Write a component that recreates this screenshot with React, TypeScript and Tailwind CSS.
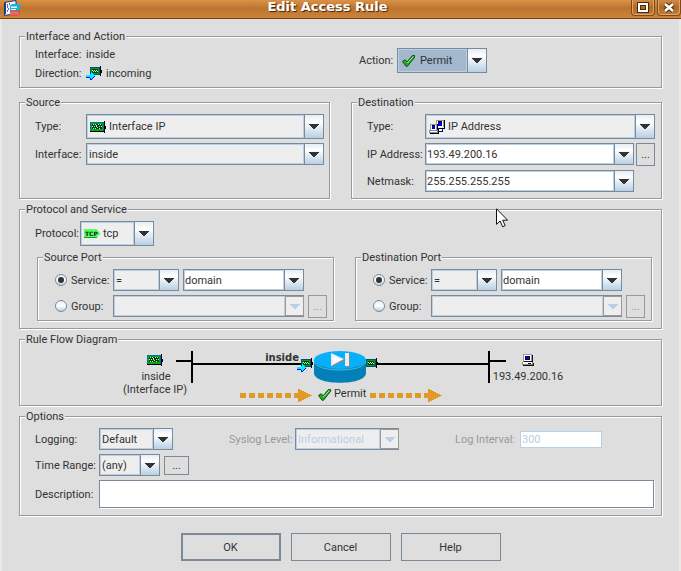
import { useId, useState, type ReactNode } from "react";

const ETCHED =
  "min-w-0 border border-[#999] shadow-[1px_1px_0_#fff,inset_1px_1px_0_#fff]";

function Group({
  title,
  className = "",
  children,
}: {
  title: string;
  className?: string;
  children: ReactNode;
}) {
  return (
    <fieldset className={`${ETCHED} ${className}`}>
      <legend className="ml-[5px] bg-[#dedede] px-px leading-[15px]">{title}</legend>
      {children}
    </fieldset>
  );
}

function Arrow({ disabled = false }: { disabled?: boolean }) {
  return (
    <svg width="10" height="5" viewBox="0 0 10 5" shapeRendering="crispEdges" aria-hidden="true">
      <path
        d="M0 0h10v1H0zM1 1h8v1H1zM2 2h6v1H2zM3 3h4v1H3zM4 4h2v1H4z"
        fill={disabled ? "#b8cfe5" : "#333"}
      />
    </svg>
  );
}

const ARROW_BOX =
  "flex h-full items-center justify-center border-l border-[#7a8a99] bg-linear-to-b from-[#e4edf6] via-white via-30% to-[#b8cfe5]";
const ARROW_BOX_OFF =
  "flex h-full items-center justify-center border border-[#999] bg-[#eee]";

function Select({
  id,
  label,
  options,
  icon,
  disabled = false,
  focused = false,
  className,
}: {
  id?: string;
  label?: string;
  options: string[];
  icon?: ReactNode;
  disabled?: boolean;
  focused?: boolean;
  className: string;
}) {
  return (
    <div
      className={`grid grid-cols-[minmax(0,1fr)_19px] border-[#7a8a99] ${
        disabled ? "border-y border-l" : "border"
      } ${className}`}
    >
      <div
        className={`col-start-1 row-start-1 flex min-w-0 items-center border border-[#b8cfe5] pl-[2px] ${
          focused ? "bg-[#a3b8cc]" : "bg-[#eee]"
        }`}
      >
        {icon}
      </div>
      <select
        id={id}
        aria-label={label}
        disabled={disabled}
        className={`z-1 col-span-2 col-start-1 row-start-1 min-w-0 appearance-none bg-transparent pr-5 outline-none ${
          icon ? "pl-[22px]" : "pl-[2px]"
        } ${disabled ? "text-[#b8cfe5] opacity-100" : ""}`}
      >
        {options.map((o) => (
          <option key={o}>{o}</option>
        ))}
      </select>
      <span
        className={`pointer-events-none col-start-2 row-start-1 ${disabled ? ARROW_BOX_OFF : ARROW_BOX}`}
      >
        <Arrow disabled={disabled} />
      </span>
    </div>
  );
}

function EditCombo({
  id,
  label,
  value,
  disabled = false,
  className,
}: {
  id?: string;
  label?: string;
  value: string;
  disabled?: boolean;
  className: string;
}) {
  return (
    <div
      className={`grid grid-cols-[minmax(0,1fr)_19px] border-[#7a8a99] ${
        disabled ? "border-y border-l" : "border"
      } ${className}`}
    >
      <input
        id={id}
        aria-label={label}
        defaultValue={value}
        disabled={disabled}
        className={`min-w-0 border border-[#b8cfe5] outline-none ${
          disabled ? "bg-[#eee]" : "bg-white"
        }`}
      />
      <button
        type="button"
        aria-label="Show choices"
        disabled={disabled}
        className={disabled ? ARROW_BOX_OFF : ARROW_BOX}
      >
        <Arrow disabled={disabled} />
      </button>
    </div>
  );
}

function MoreButton({ className, disabled = false }: { className: string; disabled?: boolean }) {
  return (
    <button
      type="button"
      aria-label="Browse"
      disabled={disabled}
      className={`shrink-0 border ${
        disabled ? "border-[#999] text-[#999]" : "border-[#7a8a99]"
      } ${className}`}
    >
      ...
    </button>
  );
}

function CardShape({ small = false }: { small?: boolean }) {
  if (small) {
    return (
      <g>
        <path d="M0 1h10v8H0z" fill="#00507c" />
        <path d="M1 2h8v6H1z" fill="#079b1c" />
        <path d="M2 3h6v4H2z" fill="#00400c" />
        <path d="M2 4h1v1H2zM3 5h1v1H3zM4 4h1v1H4zM5 5h1v1H5zM6 4h1v1H6zM7 5h1v1H7z" fill="#c4f4cc" />
        <path d="M10 0h1v10h-1zM11 4h1v3h-1z" fill="#000" />
      </g>
    );
  }
  return (
    <g>
      <path d="M0 1h14v9H0z" fill="#0074a8" />
      <path d="M1 2h12v8H1z" fill="#08a818" />
      <path d="M2 3h10v5H2z" fill="#003c08" />
      <path
        d="M3 3h1v1H3zM5 3h1v1H5zM8 3h1v1H8zM10 3h1v1h-1zM2 5h1v1H2zM4 5h1v1H4zM6 4h1v2H6zM7 6h1v1H7zM9 5h1v1H9zM11 5h1v1h-1zM3 7h1v1H3zM5 7h1v1H5zM9 7h1v1H9z"
        fill="#b8f8c4"
      />
      <path d="M0 10h14v1H0zM14 0h1v12h-1zM15 5h1v3h-1z" fill="#000" />
      <path d="M13 1h1v9h-1z" fill="#0068b8" />
    </g>
  );
}

function InArrow() {
  return (
    <g>
      <path d="M0 4h4V2h1V1h1v1h1v1h1v1h1v1H8v1H7v1H6v1H5v1H4V7H0z" fill="#00f0ff" />
      <path d="M0 6h4v1H0zM4 7h1v2H4zM5 8h1v1H5zM6 7h1v1H6zM7 6h1v1H7zM8 5h1v1H8zM4 1h1v2H4z" fill="#0010f0" />
    </g>
  );
}

function CardIcon() {
  return (
    <svg width="16" height="12" viewBox="0 0 16 12" shapeRendering="crispEdges" aria-hidden="true">
      <CardShape />
    </svg>
  );
}

function IncomingIcon() {
  return (
    <svg width="17" height="16" viewBox="0 0 17 16" shapeRendering="crispEdges" aria-hidden="true">
      <g transform="translate(4 1)">
        <CardShape small />
      </g>
      <g transform="translate(0 6)">
        <InArrow />
      </g>
    </svg>
  );
}

function CheckShape() {
  return (
    <g>
      <path
        d="M.5 6.500 3 4.800l2.200 2L10.300.6h2.300v1.600L5.400 11.300H4.100z"
        fill="#22b022"
        stroke="#0c4a0c"
        strokeWidth="1"
        strokeLinejoin="round"
      />
      <path d="M5.300 8 11.500 1.400" stroke="#a6f0a0" strokeWidth="1" fill="none" />
    </g>
  );
}

function CheckIcon() {
  return (
    <svg width="14" height="12" viewBox="0 0 14 12" className="ml-px" aria-hidden="true">
      <CheckShape />
    </svg>
  );
}

function PcShape() {
  return (
    <g>
      <path d="M1 0h9v8H1z" fill="#999" />
      <path d="M2 1h7v6H2z" fill="#fff" />
      <path d="M3 2h5v4H3z" fill="#000" />
      <path d="M4 2h3v3H4z" fill="#0000e0" />
      <path d="M10 1h1v7h-1zM2 7h8v1H2z" fill="#111" />
      <path d="M0 8h11v3H0z" fill="#888" />
      <path d="M1 8h9v2H1z" fill="#fff" />
      <path d="M6 9h3v1H6zM1 11h11v1H1zM11 9h1v2h-1z" fill="#111" />
    </g>
  );
}

function HostsIcon() {
  return (
    <svg width="16" height="14" viewBox="0 0 16 14" shapeRendering="crispEdges" aria-hidden="true">
      <path d="M7 0h8v7H7z" fill="#999" />
      <path d="M8 1h6v6H8z" fill="#fff" />
      <path d="M9 2h4v4H9z" fill="#0000d0" />
      <path d="M15 0h1v9h-1zM9 8h7v1H9zM9 1h4v1H9z" fill="#000" />
      <path d="M9 9h5v3H9z" fill="#0000a0" />
      <path d="M10 9h3v2h-3z" fill="#fff" />
      <path d="M1 4h7v6H1z" fill="#999" />
      <path d="M2 5h5v5H2z" fill="#fff" />
      <path d="M3 6h3v3H3z" fill="#0000d0" />
      <path d="M8 4h1v6H8zM3 5h3v1H3z" fill="#000" />
      <path d="M0 10h9v3H0z" fill="#888" />
      <path d="M1 11h7v1H1z" fill="#fff" />
      <path d="M1 13h9v1H1zM9 10h1v3H9z" fill="#000" />
    </svg>
  );
}

function TcpIcon() {
  return (
    <svg width="17" height="9" viewBox="0 0 17 9" aria-hidden="true">
      <path d="M0 0h12.500l4 4.500-4 4.500H0z" fill="#58fb62" />
      <path d="M0 8h13.400l-1 1H0z" fill="#159a20" />
      <text x="1" y="7" fontSize="6" fontWeight="700" fontFamily="DejaVu Sans, sans-serif" fill="#052c08">
        TCP
      </text>
    </svg>
  );
}

function AppIcon() {
  return (
    <svg width="17" height="16" viewBox="0 0 17 16" className="ml-[3px]" aria-hidden="true">
      <path d="M1.500 2.500 13 .500v13l-11.500 2z" fill="#f4f8ff" stroke="#17396b" />
      <path d="M2.500 3v11" stroke="#1a3f9c" strokeWidth="1" />
      <path d="M4 5h1M6 4h1M4 7h1M5 9h1M4 11h1" stroke="#2038d0" strokeWidth="1.500" />
      <path d="M7 5.500 9 4h8v6l-1.500 1.500H7z" fill="#18b4dc" />
      <path d="M8 6.500h6V8H8zM8 9h5v1H8z" fill="#e8fbff" />
      <path d="M7 10.500h8.500L17 9.500V14l-1.500 1.500H7z" fill="#e04038" />
      <path d="M7 12.200h9M7 14h9" stroke="#ffb8b0" strokeWidth=".6" />
    </svg>
  );
}

function TitleButton({ label, children }: { label: string; children: ReactNode }) {
  return (
    <button
      type="button"
      aria-label={label}
      className="flex h-4 w-6 items-center justify-center rounded-b-sm border border-t-0 border-[#7c4a17] bg-linear-to-b from-[#d08a44] via-[#b06a28] to-[#c47d36] shadow-[inset_1px_0_0_#dfa565,inset_-1px_-1px_0_#dfa565]"
    >
      <svg width="12" height="12" viewBox="0 0 12 12" aria-hidden="true">
        {children}
      </svg>
    </button>
  );
}

function TitleBar() {
  return (
    <header className="grid h-[19px] grid-cols-[28px_1fr_54px] items-start border-b border-[#6f4114] bg-linear-to-b from-[#dc9347] via-[#bc7530] via-45% to-[#cc8438]">
      <AppIcon />
      <h1 className="text-center font-['DejaVu_Sans',sans-serif] text-[13px] leading-[13px] font-bold text-white [text-shadow:1px_1px_1px_#3d2208]">
        Edit Access Rule
      </h1>
      <div className="flex justify-end gap-[2px]">
        <TitleButton label="Maximize">
          <rect x="2" y="2" width="8" height="7" fill="none" stroke="#4a2a0a" strokeWidth="4" />
          <rect x="2" y="2" width="8" height="7" fill="none" stroke="#fff" strokeWidth="2" />
        </TitleButton>
        <TitleButton label="Close">
          <path d="m2 2 8 7m0-7-8 7" stroke="#4a2a0a" strokeWidth="4.500" />
          <path d="m2 2 8 7m0-7-8 7" stroke="#fff" strokeWidth="2.500" />
        </TitleButton>
      </div>
    </header>
  );
}

const RADIO =
  "size-3 shrink-0 appearance-none rounded-full border border-[#7a8a99] bg-linear-to-b from-[#e4edf6] via-white to-[#b8cfe5] grid place-content-center checked:before:block checked:before:size-[6px] checked:before:rounded-full checked:before:bg-[#333]";

function PortGroup({ title }: { title: string }) {
  const [mode, setMode] = useState<"service" | "group">("service");
  const id = useId();
  return (
    <Group title={title} className="flex-1">
      <div className="flex flex-col gap-1 pt-1 pr-[6px] pb-[2px] pl-[17px]">
        <div className="flex items-center">
          <label className="flex w-[58px] shrink-0 items-center gap-1">
            <input
              type="radio"
              name={id}
              checked={mode === "service"}
              onChange={() => setMode("service")}
              className={RADIO}
            />
            Service:
          </label>
          <Select label="Operator" options={["=", "!=", ">", "<"]} className="h-[22px] w-[66px] shrink-0" />
          <EditCombo label="Service" value="domain" className="mr-[23px] ml-[4px] h-[22px] flex-1" />
        </div>
        <div className="flex items-start">
          <label className="flex h-[22px] w-[58px] shrink-0 items-center gap-1">
            <input
              type="radio"
              name={id}
              checked={mode === "group"}
              onChange={() => setMode("group")}
              className={RADIO}
            />
            Group:
          </label>
          <EditCombo label="Group" value="" disabled className="mr-1 h-[22px] flex-1" />
          <MoreButton disabled className="h-[23px] w-[19px]" />
        </div>
      </div>
    </Group>
  );
}

function FlowArrow({ x }: { x: number }) {
  return (
    <g fill="#e09a28" shapeRendering="crispEdges">
      <path
        d={`M${x} 46h6v5h-6zM${x + 9} 46h6v5h-6zM${x + 18} 46h6v5h-6zM${x + 27} 46h6v5h-6zM${x + 36} 46h6v5h-6zM${x + 45} 46h6v5h-6zM${x + 54} 46h4v5h-4z`}
      />
      <path d={`M${x + 58} 41.500l14 7-14 7z`} />
    </g>
  );
}

function FlowDiagram() {
  return (
    <svg
      width="481"
      height="58"
      viewBox="0 0 481 58"
      className="mx-auto block"
      fontSize="11"
      fill="#333"
      role="img"
      aria-label="Rule flow from inside to 193.49.200.16"
    >
      <g shapeRendering="crispEdges">
        <g transform="translate(47 7)">
          <CardShape />
        </g>
        <path d="M76 13h15v2H76zM91 4h2v32h-2zM93 16h110v2H93z" fill="#000" />
        <path d="M273 16h115v2H273zM388 4h2v32h-2zM390 13h16v2h-16z" fill="#000" />
        <g transform="translate(422 7)">
          <PcShape />
        </g>
      </g>
      <text x="56" y="33" textAnchor="middle">
        inside
      </text>
      <text x="55" y="46" textAnchor="middle">
        (Interface IP)
      </text>
      <text x="428" y="33" textAnchor="middle">
        193.49.200.16
      </text>
      <text x="199" y="14" textAnchor="end" fontWeight="700" fontFamily="DejaVu Sans, sans-serif" fontSize="10">
        inside
      </text>
      <g shapeRendering="crispEdges">
        <g transform="translate(201 11)">
          <CardShape small />
        </g>
        <g transform="translate(197 16)">
          <InArrow />
        </g>
        <g transform="translate(266 11)">
          <CardShape small />
        </g>
      </g>
      <path d="M214 13v13c0 13 52 13 52 0V13z" fill="#0480b8" />
      <ellipse cx="240" cy="13" rx="26" ry="9" fill="#08b0fc" />
      <path d="M214 14c1 12 51 12 52 0" fill="none" stroke="#48bce8" />
      <path d="m232 7 13 6-13 7zM246 7h4v13h-4z" fill="#888" />
      <path d="m231 6 13 6-13 7zM245 6h4v13h-4z" fill="#e8eef2" />
      <path d="m233 9 8 3.500-8 4z" fill="#f8fcff" />
      <FlowArrow x={140} />
      <FlowArrow x={270} />
      <g transform="translate(218 42)">
        <CheckShape />
      </g>
      <text x="234" y="50">
        Permit
      </text>
    </svg>
  );
}

function DialogButton({ children, primary = false }: { children: ReactNode; primary?: boolean }) {
  return (
    <button
      type="button"
      className={`h-7 w-[100px] border-[#7a8a99] ${primary ? "border-2" : "border"}`}
    >
      {children}
    </button>
  );
}

function MousePointer() {
  return (
    <svg
      width="14"
      height="21"
      viewBox="0 0 14 21"
      className="pointer-events-none absolute top-[208px] left-[496px] z-10"
      aria-hidden="true"
    >
      <path d="M.5.800v15.500l3.600-3.300 2.600 5.800 2.500-1.200-2.500-5.400h4.900z" fill="#fff" stroke="#111" />
    </svg>
  );
}

export default function App() {
  return (
    <div className="relative min-h-screen bg-[#dedede] font-[Roboto,sans-serif] text-[11px] leading-[15px] text-[#333]">
      <TitleBar />
      <form className="border-x-2 border-[#ece8e4] px-[17px] pt-[10px] pb-[10px]">
        <Group title="Interface and Action">
          <div className="flex pb-[5px] pl-[15px]">
            <dl className="grid w-[324px] grid-cols-[51px_1fr] grid-rows-[20px_18px] items-center">
              <dt>Interface:</dt>
              <dd>inside</dd>
              <dt>Direction:</dt>
              <dd className="flex items-center gap-[3px]">
                <IncomingIcon />
                incoming
              </dd>
            </dl>
            <div className="flex h-[33px] items-center">
              <label htmlFor="action" className="w-[38px]">
                Action:
              </label>
              <Select
                id="action"
                options={["Permit", "Deny"]}
                icon={<CheckIcon />}
                focused
                className="h-[25px] w-[90px]"
              />
            </div>
          </div>
        </Group>

        <div className="mt-[7px] flex gap-[21px]">
          <Group title="Source" className="flex-1">
            <div className="grid grid-cols-[51px_1fr] items-center gap-y-1 pt-1 pr-[5px] pb-[6px] pl-[15px]">
              <label htmlFor="src-type">Type:</label>
              <Select
                id="src-type"
                options={["Interface IP", "IP Address", "Any"]}
                icon={<CardIcon />}
                className="h-[25px]"
              />
              <label htmlFor="src-if">Interface:</label>
              <Select id="src-if" options={["inside", "outside"]} className="h-[22px]" />
            </div>
          </Group>
          <Group title="Destination" className="flex-1">
            <div className="grid grid-cols-[58px_1fr_21px] items-center gap-y-1 pt-1 pr-[6px] pb-[6px] pl-[15px]">
              <label htmlFor="dst-type">Type:</label>
              <Select
                id="dst-type"
                options={["IP Address", "Interface IP", "Any"]}
                icon={<HostsIcon />}
                className="col-span-2 h-[25px]"
              />
              <label htmlFor="dst-ip">IP Address:</label>
              <EditCombo id="dst-ip" value="193.49.200.16" className="h-[22px] self-start" />
              <MoreButton className="ml-[2px] h-[23px]" />
              <label htmlFor="dst-mask">Netmask:</label>
              <EditCombo id="dst-mask" value="255.255.255.255" className="h-[22px]" />
            </div>
          </Group>
        </div>

        <Group title="Protocol and Service" className="mt-[3px]">
          <div className="flex items-center pt-1 pl-[15px]">
            <label htmlFor="protocol" className="w-[45px]">
              Protocol:
            </label>
            <Select
              id="protocol"
              options={["tcp", "udp", "icmp", "ip"]}
              icon={<TcpIcon />}
              className="h-[25px] w-[74px]"
            />
          </div>
          <div className="flex gap-[21px] pt-1 pr-[9px] pb-[7px] pl-[17px]">
            <PortGroup title="Source Port" />
            <PortGroup title="Destination Port" />
          </div>
        </Group>

        <Group title="Rule Flow Diagram" className="mt-[3px]">
          <FlowDiagram />
        </Group>

        <Group title="Options" className="mt-[3px]">
          <div className="flex flex-col gap-1 pt-1 pr-[7px] pb-[7px] pl-[15px]">
            <div className="flex items-center">
              <label htmlFor="logging" className="w-16">
                Logging:
              </label>
              <Select id="logging" options={["Default", "Enable"]} className="h-[22px] w-[74px]" />
              <label htmlFor="syslog" className="ml-14 w-[66px] whitespace-nowrap text-[#999]">
                Syslog Level:
              </label>
              <Select id="syslog" options={["Informational"]} disabled className="h-[22px] w-[104px]" />
              <label htmlFor="interval" className="ml-14 w-[65px] whitespace-nowrap text-[#999]">
                Log Interval:
              </label>
              <input
                id="interval"
                defaultValue="300"
                disabled
                className="h-[17px] w-[82px] border border-[#b8cfe5] bg-white pl-px text-[#b8cfe5]"
              />
            </div>
            <div className="flex items-center">
              <label htmlFor="range" className="w-16 whitespace-nowrap">
                Time Range:
              </label>
              <Select id="range" options={["(any)"]} className="h-[22px] w-[61px]" />
              <MoreButton className="ml-1 h-[19px] w-[25px]" />
            </div>
            <div className="flex items-center">
              <label htmlFor="description" className="w-16">
                Description:
              </label>
              <textarea
                id="description"
                className="block h-7 flex-1 resize-none border border-[#7a8a99] bg-white px-1 py-1 shadow-[1px_1px_0_#fff] outline-none"
              />
            </div>
          </div>
        </Group>

        <div className="mt-[17px] flex justify-center gap-[10px]">
          <DialogButton primary>OK</DialogButton>
          <DialogButton>Cancel</DialogButton>
          <DialogButton>Help</DialogButton>
        </div>
      </form>
      <MousePointer />
    </div>
  );
}
